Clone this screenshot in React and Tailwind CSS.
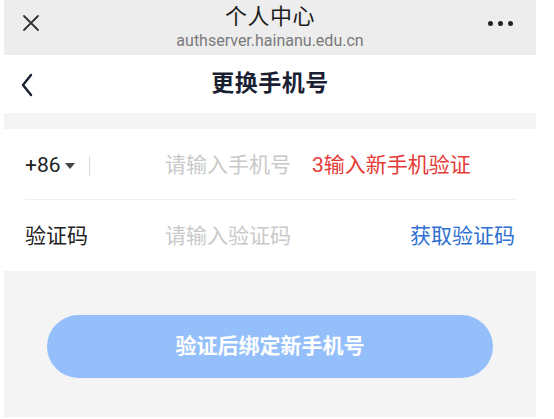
import React from "react";

const FONT = { fontFamily: 'Roboto, "Noto Sans CJK SC", sans-serif' };

const App = () => {
  return (
    <div className="w-[554px] h-[419px] bg-white pl-[4px] pr-[18px] pb-[2px]" style={FONT}>
      <div className="flex flex-col h-full bg-[#f4f4f4]">
        {/* ===== BROWSER BAR ===== */}
        <div className="relative h-[55px] bg-[#ededed] flex flex-col items-center">
          <div className="absolute left-[18px] top-[14px]">
            <svg width="18" height="18" viewBox="0 0 18 18" fill="none" stroke="#333" strokeWidth="1.8" strokeLinecap="round">
              <path d="M2 2 L16 16 M16 2 L2 16" />
            </svg>
          </div>
          <div className="mt-[2px] text-[22px] leading-[29px] text-[#1c1c1c] tracking-[0.5px]">个人中心</div>
          <div className="text-[16px] leading-[19px] text-[#7a7a7a]">authserver.hainanu.edu.cn</div>
          <div className="absolute right-[23px] top-[21px] flex gap-[5px]">
            <span className="w-[5px] h-[5px] rounded-full bg-[#222]" />
            <span className="w-[5px] h-[5px] rounded-full bg-[#222]" />
            <span className="w-[5px] h-[5px] rounded-full bg-[#222]" />
          </div>
        </div>

        {/* ===== NAV ===== */}
        <div className="relative h-[58px] bg-white flex items-center justify-center">
          <div className="absolute left-[16px] top-[18px]">
            <svg width="14" height="24" viewBox="0 0 14 24" fill="none" stroke="#1a1f33" strokeWidth="2.4" strokeLinecap="round" strokeLinejoin="round">
              <path d="M11 2 L3 12 L11 22" />
            </svg>
          </div>
          <h1 className="text-[23px] font-bold text-[#1a1f33] tracking-[0.5px]">更换手机号</h1>
        </div>

        <div className="h-[16px]" />

        {/* ===== FORM ===== */}
        <div className="bg-white px-[21px]">
          <div className="h-[71px] flex items-center border-b border-[#efefef] pt-[4px]">
            <div className="w-[140px] flex items-center">
              <span className="text-[21px] text-[#222]">+86</span>
              <svg width="10" height="6" viewBox="0 0 10 6" className="ml-[4px]">
                <path d="M0 0 L10 0 L5 6 Z" fill="#444" />
              </svg>
              <span className="ml-[14px] w-px h-[20px] bg-[#dcdcdc]" />
            </div>
            <span className="text-[21px] text-[#c9c9c9]">请输入手机号</span>
            <span className="ml-[21px] text-[21px] text-[#e53a35]">3输入新手机验证</span>
          </div>
          <div className="h-[71px] flex items-center pt-[3px]">
            <span className="w-[140px] text-[21px] text-[#222]">验证码</span>
            <span className="text-[21px] text-[#c9c9c9]">请输入验证码</span>
            <span className="ml-auto text-[21px] text-[#2f6fd0]">获取验证码</span>
          </div>
        </div>

        {/* ===== SUBMIT ===== */}
        <div className="flex justify-center pt-[44px]">
          <button className="w-[446px] h-[63px] rounded-full bg-[#94bffb] text-white text-[21px] font-semibold">
            验证后绑定新手机号
          </button>
        </div>
      </div>
    </div>
  );
};

export default App;
